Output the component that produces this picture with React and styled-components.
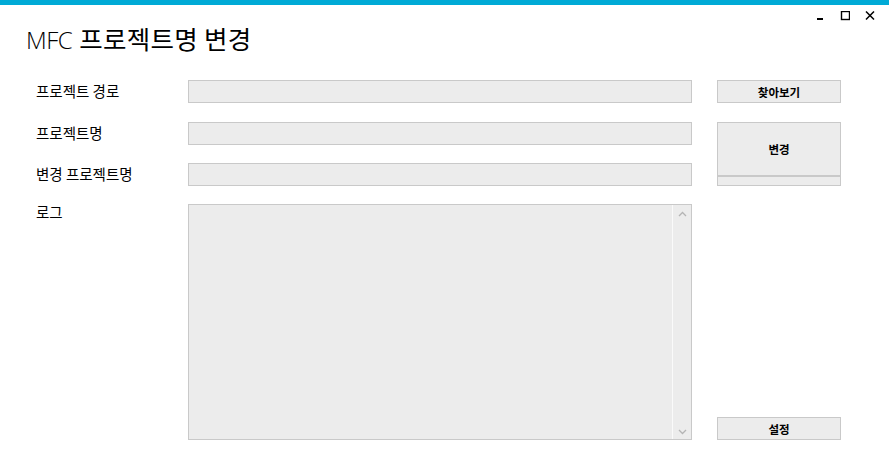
import React from "react";
import styled, { createGlobalStyle } from "styled-components";

const Global = createGlobalStyle`
  html, body { margin: 0; padding: 0; background: #ffffff; }
  body { font-family: "Noto Sans CJK KR", "Noto Sans", sans-serif; color: #000; }
`;

const Window = styled.div`
  width: 889px;
  height: 462px;
  background: #ffffff;
  display: flex;
  flex-direction: column;
  overflow: hidden;
`;

const AccentBar = styled.div`
  height: 5px;
  background: #00aad6;
  flex-shrink: 0;
`;

const Header = styled.div`
  display: flex;
  justify-content: space-between;
  align-items: flex-start;
  height: 75px;
`;

const Title = styled.h1`
  margin: 17px 0 0 26px;
  font-size: 25.5px;
  font-weight: 400;
  line-height: 32px;
  display: flex;
  align-items: baseline;
  gap: 7px;
`;

const TitleLatin = styled.span`
  font-family: "Open Sans", "Noto Sans", sans-serif;
  font-weight: 300;
  font-size: 24px;
  letter-spacing: -0.5px;
`;

const TitleKorean = styled.span`
  font-family: "Noto Sans CJK KR", sans-serif;
  font-weight: 400;
  letter-spacing: 0.3px;
`;

const Controls = styled.div`
  display: flex;
  align-items: flex-start;
  margin: 6px 7px 0 0;
`;

const ControlButton = styled.div`
  width: 25px;
  height: 17px;
  display: flex;
  align-items: center;
  justify-content: center;
`;

const Form = styled.div`
  display: grid;
  grid-template-columns: 127px 504px 124px;
  grid-template-rows: 24px 23px 23px 236px;
  column-gap: 25px;
  row-gap: 18px;
  padding-left: 36px;
`;

const Label = styled.div`
  font-size: 14.5px;
  line-height: 22px;
  height: 22px;
  align-self: start;
  margin-top: ${(p) => (p.$top ? "-3px" : "0")};
  white-space: nowrap;
`;

const Field = styled.div`
  box-sizing: border-box;
  height: 23px;
  background: #ececec;
  border: 1px solid #c9c9c9;
  align-self: start;
`;

const LogBox = styled.div`
  box-sizing: border-box;
  height: 236px;
  background: #ececec;
  border: 1px solid #c9c9c9;
  display: flex;
  justify-content: flex-end;
`;

const ScrollBar = styled.div`
  width: 18px;
  border-left: 1px solid #fafafa;
  display: flex;
  flex-direction: column;
  justify-content: space-between;
  align-items: center;
  padding: 6px 0 4px;
`;

const Button = styled.button`
  box-sizing: border-box;
  width: 124px;
  height: ${(p) => p.$h || "23px"};
  background: #ececec;
  border: 1px solid #c9c9c9;
  margin: 0;
  padding: 0;
  font-family: "Noto Sans CJK KR", sans-serif;
  font-size: 11.5px;
  font-weight: 700;
  color: #000;
  display: flex;
  align-items: center;
  justify-content: center;
  align-self: ${(p) => p.$align || "start"};
`;

const ButtonStack = styled.div`
  grid-row: 2 / span 2;
  grid-column: 3;
  display: flex;
  flex-direction: column;
`;

const ButtonStrip = styled.div`
  box-sizing: border-box;
  height: 10px;
  background: #ececec;
  border: 1px solid #c9c9c9;
`;

function Caret({ down }) {
  return (
    <svg width="9" height="6" viewBox="0 0 9 6">
      <path
        d={down ? "M1 1 L4.5 4.5 L8 1" : "M1 5 L4.5 1.5 L8 5"}
        fill="none"
        stroke="#b4b4b4"
        strokeWidth="1.3"
      />
    </svg>
  );
}

export default function App() {
  return (
    <Window>
      <Global />
      <AccentBar />
      <Header>
        <Title>
          <TitleLatin>MFC</TitleLatin>
          <TitleKorean>프로젝트명 변경</TitleKorean>
        </Title>
        <Controls>
          <ControlButton>
            <svg width="10" height="17" viewBox="0 0 10 17">
              <rect x="2" y="7" width="6" height="2" fill="#000" />
            </svg>
          </ControlButton>
          <ControlButton>
            <svg width="10" height="17" viewBox="0 0 10 17">
              <rect x="1.5" y="0.5" width="8" height="8" fill="none" stroke="#000" strokeWidth="1.4" />
            </svg>
          </ControlButton>
          <ControlButton>
            <svg width="10" height="17" viewBox="0 0 10 17">
              <path d="M1 0.5 L9 8.5 M9 0.5 L1 8.5" stroke="#000" strokeWidth="1.5" />
            </svg>
          </ControlButton>
        </Controls>
      </Header>
      <Form>
        <Label>프로젝트 경로</Label>
        <Field />
        <Button>찾아보기</Button>

        <Label>프로젝트명</Label>
        <Field />
        <ButtonStack>
          <Button $h="54px">변경</Button>
          <ButtonStrip />
        </ButtonStack>

        <Label>변경 프로젝트명</Label>
        <Field />

        <Label $top>로그</Label>
        <LogBox>
          <ScrollBar>
            <Caret />
            <Caret down />
          </ScrollBar>
        </LogBox>
        <Button $align="end">설정</Button>
      </Form>
    </Window>
  );
}
